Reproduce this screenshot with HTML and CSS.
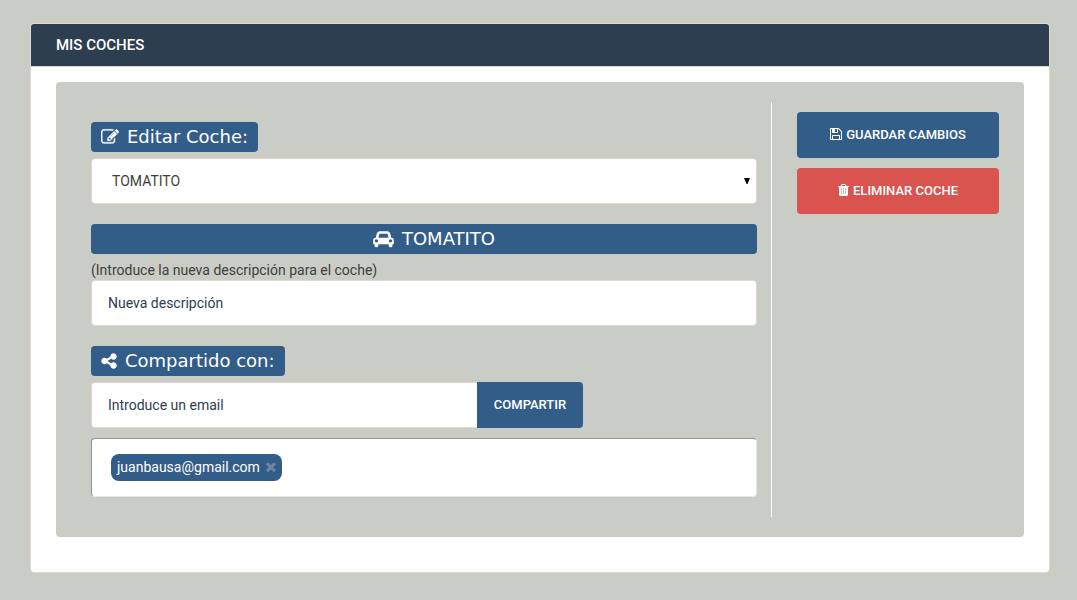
FILE: index.html
```html
<!DOCTYPE html>
<html lang="es">
<head>
<meta charset="utf-8">
<title>Mis coches</title>
<link rel="stylesheet" href="styles.css">
</head>
<body>
<main class="panel">
  <h1 class="panel-heading">MIS COCHES</h1>
  <div class="panel-body">
    <form class="well">
      <div class="editor">
        <section class="group">
          <label class="tag" for="car"><svg class="icon icon-edit" viewBox="0 0 1792 1792" aria-hidden="true"><path d="M888 1184l116-116-152-152-116 116v56h96v96h56zm440-720q-16-16-33 1l-350 350q-17 17-1 33t33-1l350-350q17-17 1-33zm80 594v190q0 119-84.5 203.5t-203.5 84.5h-832q-119 0-203.5-84.5t-84.5-203.5v-832q0-119 84.5-203.5t203.5-84.5h832q63 0 117 25 15 7 18 23 3 17-9 29l-49 49q-14 14-32 8-23-6-45-6h-832q-66 0-113 47t-47 113v832q0 66 47 113t113 47h832q66 0 113-47t47-113v-126q0-13 9-22l64-64q15-15 35-7t20 29zm-96-738l288 288-672 672h-288v-288zm444 132l-92 92-288-288 92-92q28-28 68-28t68 28l152 152q28 28 28 68t-28 68z"/></svg>Editar Coche:</label>
          <div class="select-wrap">
            <select class="field select" id="car"><option>TOMATITO</option></select>
            <svg class="arrow" viewBox="0 0 6 6" aria-hidden="true"><path d="M0 0h6L3.500 6h-1z"/></svg>
          </div>
        </section>
        <section class="group">
          <h2 class="tag tag-wide"><svg class="icon icon-car" viewBox="0 0 2048 1792" aria-hidden="true"><path d="M480 1088q0-66-47-113t-113-47-113 47-47 113 47 113 113 47 113-47 47-113zm36-320h1016l-89-357q-2-8-14-17.500t-21-9.500h-768q-9 0-21 9.500t-14 17.500zm1372 320q0-66-47-113t-113-47-113 47-47 113 47 113 113 47 113-47 47-113zm160-96v384q0 14-9 23t-23 9h-96v128q0 80-56 136t-136 56-136-56-56-136v-128h-1024v128q0 80-56 136t-136 56-136-56-56-136v-128h-96q-14 0-23-9t-9-23v-384q0-93 65.500-158.500t158.500-65.500h28l105-419q23-94 104-157.500t179-63.500h768q98 0 179 63.500t104 157.500l105 419h28q93 0 158.500 65.500t65.500 158.500z"/></svg>TOMATITO</h2>
          <label class="hint" for="description">(Introduce la nueva descripción para el coche)</label>
          <input class="field" id="description" type="text" placeholder="Nueva descripción">
        </section>
        <section class="group">
          <label class="tag" for="email"><svg class="icon icon-share" viewBox="0 0 1536 1792" aria-hidden="true"><path transform="translate(-128 0)" d="M1344 1024q133 0 226.500 93.500t93.500 226.500-93.500 226.500-226.500 93.500-226.500-93.500-93.500-226.500q0-12 2-34l-360-180q-92 86-218 86-133 0-226.500-93.500t-93.500-226.500 93.500-226.500 226.500-93.500q126 0 218 86l360-180q-2-22-2-34 0-133 93.500-226.500t226.500-93.500 226.500 93.500 93.500 226.500-93.500 226.500-226.500 93.500q-126 0-218-86l-360 180q2 22 2 34t-2 34l360 180q92-86 218-86z"/></svg>Compartido con:</label>
          <div class="share-row">
            <input class="field" id="email" type="email" placeholder="Introduce un email">
            <button class="button button-share" type="button">COMPARTIR</button>
          </div>
          <div class="shared-list">
            <span class="chip">juanbausa@gmail.com<button class="chip-remove" type="button" aria-label="Quitar"><svg viewBox="302 302 1188 1252" aria-hidden="true"><path d="M1490 1322q0 40-28 68l-136 136q-28 28-68 28t-68-28l-294-294-294 294q-28 28-68 28t-68-28l-136-136q-28-28-28-68t28-68l294-294-294-294q-28-28-28-68t28-68l136-136q28-28 68-28t68 28l294 294 294-294q28-28 68-28t68 28l136 136q28 28 28 68t-28 68l-294 294 294 294q28 28 28 68z"/></svg></button></span>
          </div>
        </section>
      </div>
      <div class="actions">
        <button class="button" type="button"><svg class="icon-small" viewBox="128 0 1536 1792" aria-hidden="true"><path d="M512 1536h768v-384h-768v384zm896 0h128v-896q0-14-10-38.500t-20-34.500l-281-281q-10-10-34-20t-39-10v416q0 40-28 68t-68 28h-576q-40 0-68-28t-28-68v-416h-128v1280h128v-416q0-40 28-68t68-28h832q40 0 68 28t28 68v416zm-384-928v-320q0-13-9.500-22.500t-22.500-9.500h-192q-13 0-22.500 9.500t-9.500 22.500v320q0 13 9.500 22.500t22.500 9.500h192q13 0 22.500-9.500t9.500-22.500zm640 32v928q0 40-28 68t-68 28h-1344q-40 0-68-28t-28-68v-1344q0-40 28-68t68-28h928q40 0 88 20t76 48l280 280q28 28 48 76t20 88z"/></svg>GUARDAR CAMBIOS</button>
        <button class="button button-danger" type="button"><svg class="icon-small icon-trash" viewBox="192 0 1408 1792" aria-hidden="true"><path fill-opacity=".5" d="M420 600h950v850h-950z"/><path d="M704 1376v-704q0-14-9-23t-23-9h-64q-14 0-23 9t-9 23v704q0 14 9 23t23 9h64q14 0 23-9t9-23zm256 0v-704q0-14-9-23t-23-9h-64q-14 0-23 9t-9 23v704q0 14 9 23t23 9h64q14 0 23-9t9-23zm256 0v-704q0-14-9-23t-23-9h-64q-14 0-23 9t-9 23v704q0 14 9 23t23 9h64q14 0 23-9t9-23zm-544-992h448l-48-117q-7-9-17-11h-317q-10 2-17 11zm928 32v64q0 14-9 23t-23 9h-96v948q0 83-47 143.500t-113 60.500h-832q-66 0-113-58.500t-47-141.500v-952h-96q-14 0-23-9t-9-23v-64q0-14 9-23t23-9h309l70-167q15-37 54-63t79-26h320q40 0 79 26t54 63l70 167h309q14 0 23 9t9 23z"/></svg>ELIMINAR COCHE</button>
      </div>
    </form>
  </div>
</main>
</body>
</html>
```

FILE: styles.css
```css
* {
  box-sizing: border-box;
}

body {
  margin: 0;
  padding: 23px 27px 27px 30px;
  background: #cacdc6;
  color: #3e3f3a;
  font-family: Roboto, "Liberation Sans", sans-serif;
  font-size: 14px;
  line-height: 20px;
}

.panel {
  background: #fff;
  border: 1px solid #dfd7ca;
  border-radius: 4px;
}

.panel-heading {
  margin: 0;
  padding: 11px 25px;
  background: #2d3e50;
  border-bottom: 1px solid #dfd7ca;
  border-radius: 3px 3px 0 0;
  color: #fff;
  font-size: 15px;
  font-weight: 500;
  line-height: 20px;
}

.panel-body {
  padding: 15px 25px 35px;
}

.well {
  display: grid;
  grid-template-columns: 3fr 1fr;
  padding: 20px;
  background: #cacdc6;
  border-radius: 4px;
}

.editor {
  display: flex;
  flex-direction: column;
  gap: 20px;
  padding: 20px 14px 20px 15px;
  border-right: 1px solid #fff;
}

.group {
  display: flex;
  flex-direction: column;
  align-items: flex-start;
}

.tag {
  display: flex;
  align-items: center;
  gap: 8px;
  height: 30px;
  margin: 0 0 6px;
  padding: 0 10px;
  background: #325d88;
  border-radius: 4px;
  color: #fff;
  font-family: "DejaVu Sans", sans-serif;
  font-size: 18px;
  font-weight: 400;
}

.tag-wide {
  align-self: stretch;
  justify-content: center;
  padding-left: 30px;
}

.icon {
  width: 18px;
  height: 18px;
  fill: currentColor;
}

.icon-edit {
  stroke: currentColor;
  stroke-width: 30;
}

.icon-car {
  width: 21px;
}

.icon-share {
  width: 16px;
}

.field {
  display: block;
  width: 100%;
  min-width: 0;
  height: 46px;
  padding: 12px 16px;
  background: #fff;
  border: 1px solid #dfd7ca;
  border-radius: 4px;
  color: #3e3f3a;
  font: inherit;
}

.field::placeholder {
  color: #2c3e50;
  opacity: 1;
}

.select-wrap {
  position: relative;
  width: 100%;
}

.select {
  padding: 0 20px;
  appearance: none;
}

.arrow {
  position: absolute;
  top: 20px;
  right: 7px;
  width: 6px;
  height: 6px;
  fill: #000;
  pointer-events: none;
}

.share-row {
  display: flex;
  width: 100%;
  max-width: 492px;
}

.share-row .field {
  flex: 1;
  border-right: 0;
  border-radius: 4px 0 0 4px;
}

.button {
  display: flex;
  align-items: center;
  justify-content: center;
  gap: 4px;
  height: 46px;
  padding: 0 16px;
  background: #325d88;
  border: 0;
  border-radius: 4px;
  color: #fff;
  font: 500 13px/20px Roboto, "Liberation Sans", sans-serif;
}

.button-share {
  min-width: 106px;
  border-radius: 0 4px 4px 0;
}

.button-danger {
  background: #d9534f;
}

.icon-small {
  width: 12px;
  height: 14px;
  margin-bottom: 2px;
  fill: currentColor;
}

.icon-trash {
  width: 11px;
}

.shared-list {
  display: flex;
  flex-wrap: wrap;
  width: 100%;
  margin-top: 10px;
  padding: 15px 19px;
  background: #fff;
  border: 1px solid #e4e4e4;
  border-top-color: #929292;
  border-left-color: #929292;
  border-radius: 4px;
}

.chip {
  display: flex;
  align-items: center;
  gap: 6px;
  height: 27px;
  padding: 0 6px 2px;
  background: #325d88;
  border-radius: 8px;
  color: #fff;
}

.chip-remove {
  display: flex;
  padding: 0;
  background: none;
  border: 0;
  color: #6985a3;
}

.chip-remove svg {
  width: 10px;
  height: 10px;
  fill: currentColor;
}

.actions {
  display: flex;
  flex-direction: column;
  gap: 10px;
  padding: 10px 5px 0 25px;
}
```
